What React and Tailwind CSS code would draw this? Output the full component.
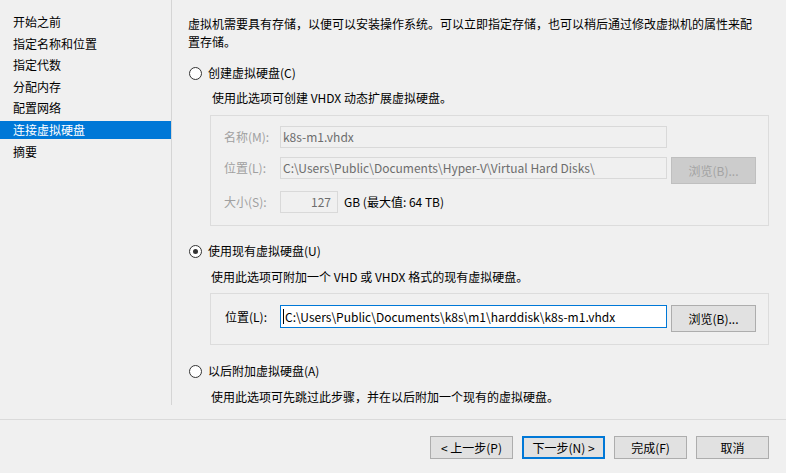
import React from "react";

const navItems = [
  "开始之前",
  "指定名称和位置",
  "指定代数",
  "分配内存",
  "配置网络",
  "连接虚拟硬盘",
  "摘要",
];

function Radio({ checked }) {
  return (
    <span className="ml-[1px] w-[13px] h-[13px] rounded-full border border-[#333333] bg-white flex items-center justify-center shrink-0">
      {checked && <span className="w-[5px] h-[5px] rounded-full bg-[#333333]"></span>}
    </span>
  );
}

function Button({ children, width, focused }) {
  return (
    <div
      className={`h-[23px] ${width} flex items-center justify-center bg-[#e1e1e1] text-black ${
        focused ? "border-2 border-[#0078d7]" : "border border-[#adadad]"
      }`}
    >
      {children}
    </div>
  );
}

export default function App() {
  const active = "连接虚拟硬盘";

  return (
    <div className="w-[786px] h-[473px] bg-[#f0f0f0] text-[12px] leading-[18px] text-black font-['Microsoft_YaHei_UI','Noto_Sans_CJK_SC',sans-serif] overflow-hidden">
      {/* Upper area */}
      <div className="h-[419px] flex">
        {/* Nav */}
        <div className="w-[172px] h-[405px] border-r border-[#d5d5d5] pt-[13px] flex flex-col gap-[3.6px] shrink-0">
          {navItems.map((item) => (
            <div
              key={item}
              className={`h-[18px] pl-[13px] flex items-center ${
                item === active ? "bg-[#0078d7] text-white" : ""
              }`}
            >
              {item}
            </div>
          ))}
        </div>

        {/* Content */}
        <div className="flex-1 pl-[16px] pr-[17px] pt-[15px]">
          <p className="w-[568px]">
            虚拟机需要具有存储，以便可以安装操作系统。可以立即指定存储，也可以稍后通过修改虚拟机的属性来配置存储。
          </p>

          {/* Create */}
          <div className="mt-[13px] h-[18px] flex items-center gap-[6px]">
            <Radio />
            <span>创建虚拟硬盘(C)</span>
          </div>
          <p className="mt-[7px] pl-[24px]">使用此选项可创建 VHDX 动态扩展虚拟硬盘。</p>

          <div className="mt-[8px] ml-[22px] border border-[#dcdcdc] pt-[10px] pb-[12px] pl-[13px]">
            <div className="h-[22px] flex items-center">
              <span className="w-[56px] text-[#a0a0a0]">名称(M):</span>
              <div className="w-[387px] h-[22px] border border-[#d9d9d9] px-[2px] flex items-center text-[#6d6d6d]">
                k8s-m1.vhdx
              </div>
            </div>
            <div className="mt-[9px] h-[27px] flex items-start">
              <span className="w-[56px] h-[22px] flex items-center text-[#a0a0a0]">位置(L):</span>
              <div className="w-[387px] h-[22px] border border-[#d9d9d9] px-[2px] flex items-center text-[#6d6d6d]">
                C:\Users\Public\Documents\Hyper-V\Virtual Hard Disks\
              </div>
              <div className="ml-[4px] w-[85px] h-[27px] bg-[#cccccc] border border-[#bfbfbf] flex items-center justify-center text-[#a3a3a3]">
                浏览(B)...
              </div>
            </div>
            <div className="mt-[7px] h-[22px] flex items-center">
              <span className="w-[56px] text-[#a0a0a0]">大小(S):</span>
              <div className="w-[58px] h-[22px] border border-[#d9d9d9] px-[6px] flex items-center justify-end text-[#6d6d6d]">
                127
              </div>
              <span className="ml-[6px]">GB (最大值: 64 TB)</span>
            </div>
          </div>

          {/* Use existing */}
          <div className="mt-[16px] h-[18px] flex items-center gap-[6px]">
            <Radio checked />
            <span>使用现有虚拟硬盘(U)</span>
          </div>
          <p className="mt-[8px] pl-[23px]">使用此选项可附加一个 VHD 或 VHDX 格式的现有虚拟硬盘。</p>

          <div className="mt-[7px] ml-[22px] border border-[#dcdcdc] pt-[11px] pb-[12px] pl-[14px]">
            <div className="h-[27px] flex items-start">
              <span className="w-[55px] h-[23px] flex items-center">位置(L):</span>
              <div className="w-[387px] h-[23px] bg-white border border-[#0078d7] pl-[2px] flex items-center">
                <span className="w-[1px] h-[15px] bg-black mr-[1px]"></span>
                C:\Users\Public\Documents\k8s\m1\harddisk\k8s-m1.vhdx
              </div>
              <div className="ml-[4px] w-[85px] h-[27px] bg-[#e1e1e1] border border-[#adadad] flex items-center justify-center">
                浏览(B)...
              </div>
            </div>
          </div>

          {/* Attach later */}
          <div className="mt-[17px] h-[18px] flex items-center gap-[6px]">
            <Radio />
            <span>以后附加虚拟硬盘(A)</span>
          </div>
          <p className="mt-[8px] pl-[23px]">使用此选项可先跳过此步骤，并在以后附加一个现有的虚拟硬盘。</p>
        </div>
      </div>

      {/* Footer */}
      <div className="border-t border-[#dadada] pt-[16px] pr-[17px] flex justify-end gap-[9px]">
        <Button width="w-[83px]">&lt; 上一步(P)</Button>
        <Button width="w-[83px]" focused>
          下一步(N) &gt;
        </Button>
        <Button width="w-[73px]">完成(F)</Button>
        <Button width="w-[73px]">取消</Button>
      </div>
    </div>
  );
}
